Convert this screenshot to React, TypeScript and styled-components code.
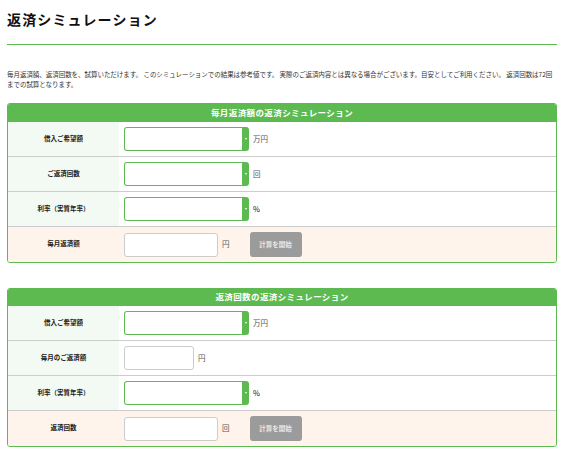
import React from "react";
import styled, {createGlobalStyle} from "styled-components";

const GREEN = "#5dba50";

const GlobalStyle = createGlobalStyle`
    html, body {
        margin: 0;
        padding: 0;
        background: #FFFFFF;
        font-family: "Noto Sans CJK JP", "Liberation Sans", sans-serif;
        color: #222222;
    }
`;

const Page = styled.div`
    width: 564px;
    height: 458px;
    box-sizing: border-box;
    padding: 0 7px;
    overflow: hidden;
`;

const Title = styled.h1`
    margin: 0;
    height: 45px;
    box-sizing: border-box;
    padding-top: 9px;
    font-size: 14px;
    line-height: 20px;
    font-weight: 700;
    letter-spacing: 1.15px;
    color: #111111;
    border-bottom: 1px solid ${GREEN};
`;

const Lead = styled.p`
    margin: 24px 0 14px;
    font-size: 6.5px;
    line-height: 10px;
    letter-spacing: -.04px;
    color: #333333;
`;

const Card = styled.section`
    border: 1px solid ${GREEN};
    border-radius: 3px;
    overflow: hidden;
    margin-bottom: 25px;
`;

const CardHeader = styled.h2<{$height: number}>`
    margin: 0;
    height: ${({$height}) => $height}px;
    line-height: ${({$height}) => $height - 2}px;
    background: ${GREEN};
    color: #FFFFFF;
    font-size: 8.5px;
    font-weight: 700;
    letter-spacing: .4px;
    text-align: center;
`;

const Row = styled.div<{$result?: boolean}>`
    display: flex;
    height: 35px;
    box-sizing: border-box;
    border-bottom: 1px solid #cccccc;
    background: ${({$result}) => $result ? "#fef4ec" : "#FFFFFF"};

    &:last-child {
        border-bottom: 0;
    }
`;

const Label = styled.div<{$result?: boolean}>`
    flex: 0 0 111px;
    display: flex;
    align-items: center;
    justify-content: center;
    padding-bottom: 3px;
    box-sizing: border-box;
    background: ${({$result}) => $result ? "transparent" : "#f3f9f3"};
    font-size: 6.5px;
    font-weight: 700;
    color: #222222;
`;

const Field = styled.div`
    flex: 1;
    display: flex;
    align-items: center;
    padding-left: 5px;
`;

const SelectBox = styled.div`
    position: relative;
    width: 125px;
    height: 24px;

    &::after {
        content: "";
        position: absolute;
        top: 11px;
        right: 2px;
        border-style: solid;
        border-width: 2.5px 1.5px 0;
        border-color: #FFFFFF transparent transparent;
    }
`;

const Select = styled.select`
    appearance: none;
    display: block;
    width: 100%;
    height: 100%;
    box-sizing: border-box;
    padding: 0;
    border: 1px solid ${GREEN};
    border-right-width: 7px;
    border-radius: 3px;
    background: #FFFFFF;
    outline: 0;
`;

const Input = styled.input<{$width: number}>`
    display: block;
    width: ${({$width}) => $width}px;
    height: 24px;
    box-sizing: border-box;
    padding: 0;
    border: 1px solid #cccccc;
    border-radius: 3px;
    background: #FFFFFF;
    outline: 0;
`;

const Unit = styled.span<{$strong?: boolean}>`
    margin-left: 4px;
    margin-bottom: 2px;
    font-size: 7.5px;
    color: ${({$strong}) => $strong ? "#111111" : "#555555"};
`;

const StartButton = styled.button`
    width: 52px;
    height: 25px;
    margin-left: 20px;
    padding: 0 0 2px;
    border: 0;
    border-radius: 3px;
    background: #9b9b9b;
    color: #e8e8e8;
    font-family: inherit;
    font-size: 6.5px;
    font-weight: 700;
`;

type FieldDef =
    | {label: string; kind: "select"; unit: string}
    | {label: string; kind: "input"; unit: string};

interface ISimulation {
    title: string;
    headerHeight: number;
    fields: FieldDef[];
    resultLabel: string;
    resultUnit: string;
}

const simulations: ISimulation[] = [
    {
        title: "毎月返済額の返済シミュレーション",
        headerHeight: 18,
        fields: [
            {label: "借入ご希望額", kind: "select", unit: "万円"},
            {label: "ご返済回数", kind: "select", unit: "回"},
            {label: "利率（実質年率）", kind: "select", unit: "%"}
        ],
        resultLabel: "毎月返済額",
        resultUnit: "円"
    },
    {
        title: "返済回数の返済シミュレーション",
        headerHeight: 17,
        fields: [
            {label: "借入ご希望額", kind: "select", unit: "万円"},
            {label: "毎月のご返済額", kind: "input", unit: "円"},
            {label: "利率（実質年率）", kind: "select", unit: "%"}
        ],
        resultLabel: "返済回数",
        resultUnit: "回"
    }
];

export default function App() {
    return (
        <Page>
            <GlobalStyle />
            <Title>返済シミュレーション</Title>
            <Lead>
                毎月返済額、返済回数を、試算いただけます。 このシミュレーションでの結果は参考値です。 実際のご返済内容とは異なる場合がございます。目安としてご利用ください。 返済回数は72回までの試算となります。
            </Lead>
            {
                simulations.map((s) => (
                    <Card key={s.title}>
                        <CardHeader $height={s.headerHeight}>{s.title}</CardHeader>
                        {
                            s.fields.map((f) => (
                                <Row key={f.label}>
                                    <Label>{f.label}</Label>
                                    <Field>
                                        {f.kind === "select" ? (
                                            <SelectBox><Select /></SelectBox>
                                        ) : (
                                            <Input $width={70} />
                                        )}
                                        <Unit $strong={f.unit === "%"}>{f.unit}</Unit>
                                    </Field>
                                </Row>
                            ))
                        }
                        <Row $result={true}>
                            <Label $result={true}>{s.resultLabel}</Label>
                            <Field>
                                <Input $width={94} />
                                <Unit>{s.resultUnit}</Unit>
                                <StartButton>計算を開始</StartButton>
                            </Field>
                        </Row>
                    </Card>
                ))
            }
        </Page>
    );
}
